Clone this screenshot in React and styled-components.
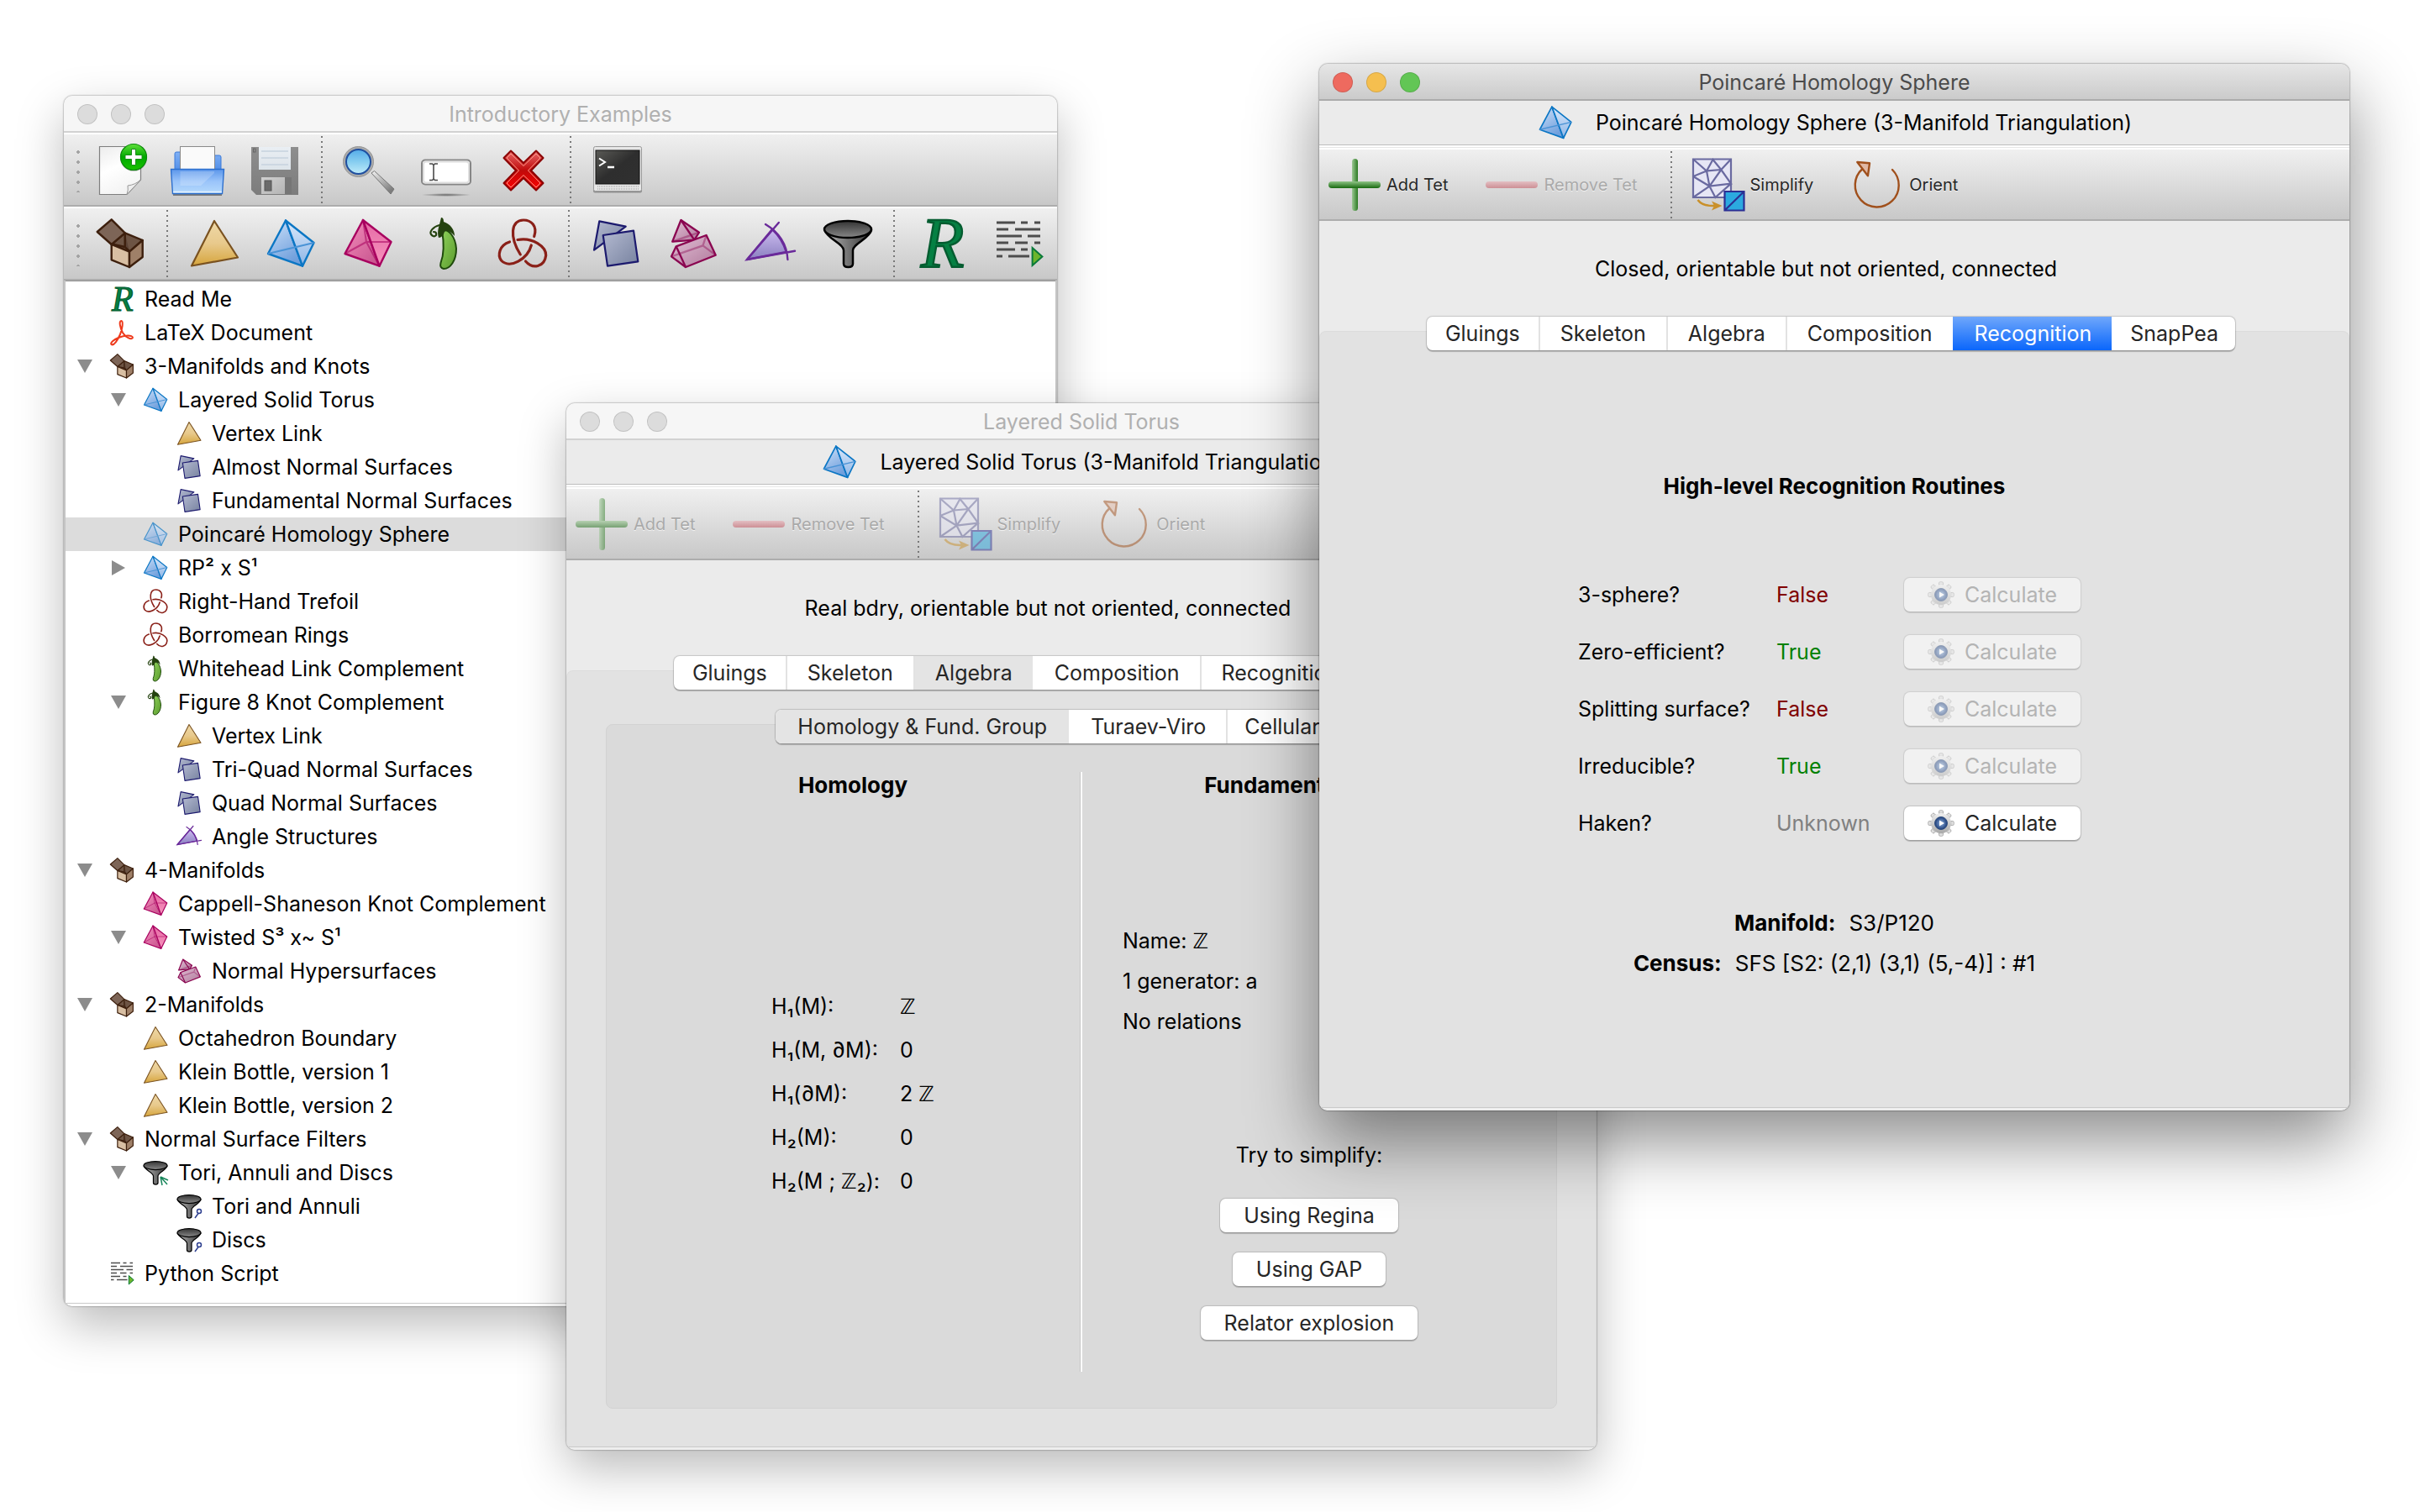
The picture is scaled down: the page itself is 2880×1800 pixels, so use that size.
import React from 'react';
import styled, { createGlobalStyle, css } from 'styled-components';

const font = '"Inter", "Liberation Sans", "DejaVu Sans", sans-serif';

const GlobalStyle = createGlobalStyle`
  * { box-sizing: border-box; }
  body {
    margin: 0;
    background: #fff;
    color: #000;
    font: 25px/32px ${font};
  }
  button { font: inherit; color: inherit; margin: 0; padding: 0; border: 0; background: none; }
  h1, h2, p, ul, dl, dd, dt { margin: 0; padding: 0; font: inherit; }
  ul { list-style: none; }
  svg { display: block; flex: none; overflow: visible; }
`;

/* ---------- icon drawings ---------- */

const HiddenSvg = styled.svg`
  position: absolute;
  width: 0;
  height: 0;
`;

const Grad = ({ id, from, to, mid, x2 = 0, y2 = 1 }) => (
  <linearGradient id={id} x1="0" y1="0" x2={x2} y2={y2}>
    <stop offset="0" stopColor={from} />
    {mid && <stop offset="0.5" stopColor={mid} />}
    <stop offset="1" stopColor={to} />
  </linearGradient>
);

const Gradients = () => (
  <HiddenSvg aria-hidden="true">
    <defs>
      <Grad id="gold" from="#efd9a8" mid="#e8c98c" to="#d6a53c" />
      <Grad id="blueL" from="#cfe2fa" to="#6f9fdc" x2={0.5} />
      <Grad id="blueR" from="#dbe9fb" to="#8db5e6" />
      <Grad id="pinkL" from="#f58fbd" to="#c9568f" x2={0.8} />
      <Grad id="pinkR" from="#e56aa5" to="#f794bd" />
      <Grad id="slate" from="#b4bad1" to="#77829f" x2={1} />
      <Grad id="mauve" from="#e2bfd5" to="#b07a9c" x2={1} />
      <Grad id="violet" from="#cdbdf0" to="#8a7fc0" />
      <Grad id="chili" from="#8fd25c" to="#5a9a2c" x2={1} />
      <Grad id="cup" from="#333" to="#888" />
      <Grad id="stem" from="#b5b5b5" to="#333" x2={1} y2={0} />
      <Grad id="paper" from="#ececec" mid="#fff" to="#f4f4f4" x2={0.4} />
      <Grad id="folder" from="#5b96ea" mid="#9ac4fa" to="#b5dafc" />
      <Grad id="folderBack" from="#7fb0f5" to="#5490e8" />
      <Grad id="badge" from="#5fe03a" mid="#00a800" to="#18c400" />
      <Grad id="disk" from="#8e8e8e" to="#7c7c7c" />
      <Grad id="diskLabel" from="#e9eef3" to="#dde4ea" />
      <Grad id="shutter" from="#d0d0d0" to="#b4b4b4" x2={1} />
      <Grad id="lens" from="#4fa8e8" mid="#86cdf0" to="#c5eefa" />
      <Grad id="handle" from="#f2f2f2" to="#7d7d7d" x2={0.6} />
      <Grad id="cross" from="#e86a6a" mid="#c00a0a" to="#ff0000" />
      <Grad id="screen" from="#5a5a56" mid="#2e2e2e" to="#303030" x2={1} />
      <Grad id="plusV" from="#9cc894" to="#2b7a22" x2={1} y2={0} />
      <Grad id="plusH" from="#8fc486" to="#17690f" />
      <Grad id="minus" from="#e8a0a8" to="#c04450" />
      <Grad id="gear" from="#f0f0f0" to="#a8a8a8" />
      <radialGradient id="gearHub">
        <stop offset="0" stopColor="#8fb2e0" />
        <stop offset="1" stopColor="#1c3c78" />
      </radialGradient>
      <radialGradient id="floor">
        <stop offset="0" stopColor="#666" />
        <stop offset="1" stopColor="#666" stopOpacity="0" />
      </radialGradient>
    </defs>
  </HiddenSvg>
);

const funnel = (
  <g stroke="#000" strokeWidth="2.5" strokeLinejoin="round">
    <path d="M4.5 16C7 26 27 32 27 40V56Q27 60 32.5 60T38 56V40C38 32 58 26 60 16Z" fill="url(#stem)" />
    <ellipse cx="32" cy="15" rx="28" ry="10" fill="url(#cup)" />
  </g>
);

const gearTeeth = [0, 45, 90, 135, 180, 225, 270, 315];

const art = {
  container: (
    <g stroke="#3d1f0d" strokeWidth="2.4" strokeLinejoin="round">
      <path d="M37.700 19.300L58.700 28L43 41.700L21.700 33Z" fill="#6d5444" />
      <path d="M37.700 19.300V36L43 41M37.700 36L24 33" fill="#5b4336" />
      <path d="M21.700 3.300L4.700 18L21.700 33L37.700 19.300Z" fill="#7d6557" />
      <path d="M21.700 33V51.300L43 60V41.700Z" fill="#d8bfa3" />
      <path d="M43 41.700L58.700 28V48L43 60Z" fill="#9f8068" />
    </g>
  ),
  dim2: <path d="M32 5L5 58.500L60 48.500Z" fill="url(#gold)" stroke="#7a5220" strokeWidth="2.2" strokeLinejoin="round" />,
  dim3: (
    <g stroke="#0b76c4" strokeWidth="2.4" strokeLinejoin="round">
      <path d="M26 4.500L5 44L46 58.700Z" fill="url(#blueL)" />
      <path d="M26 4.500L59.500 31L46 58.700Z" fill="url(#blueR)" />
      <path d="M5 44L59.500 31" stroke="#4a93d6" strokeWidth="2" />
    </g>
  ),
  dim4: (
    <g stroke="#a8005f" strokeWidth="2.4" strokeLinejoin="round">
      <path d="M26 4L4.500 44L45.500 58.700Z" fill="url(#pinkL)" />
      <path d="M26 4L59.500 30L45.500 58.700Z" fill="url(#pinkR)" />
      <path d="M4.500 44L30 30L59.500 30M26 4L30 30L45.500 58.700" fill="none" strokeOpacity="0.55" strokeWidth="2" />
    </g>
  ),
  snappea: (
    <g>
      <path d="M28 16C36 14 44 24 45 38C45 52 38 62 30 62Q25 61 26.500 55C30 46 31 34 28 16Z" fill="url(#chili)" stroke="#1f4a0c" strokeWidth="2" />
      <path d="M27 1Q30 1 30 6C38 9 43 15 43 23C38 17 34 16 31 18Q29 25 24 25C22 18 24 13 25 9Z" fill="#24420f" />
      <path d="M25 10C17 12 13 18 15 21Q18 25 21 22Q22 18 18 18" fill="none" stroke="#24420f" strokeWidth="2.2" strokeLinecap="round" />
    </g>
  ),
  link: (
    <g fill="none" strokeLinecap="round">
      <g stroke="#8a2018" strokeWidth="3.2">
        <path d="M45.700 23.500C50 11 42 4 33 4C18 4 16 24 29.300 45" />
        <path d="M16.500 30C4 34 2 46 6.500 52C17 63 38 50 42.300 34" />
        <path d="M26 27.500C44 24 60 36 59.700 46C58 60 44 63 35.500 53" />
      </g>
    </g>
  ),
  surfaces: (
    <g stroke="#1c1a6e" strokeWidth="2.2" strokeLinejoin="round" fill="url(#slate)">
      <path d="M12.300 5.300L43.700 11.700L6 39.700Z" />
      <path d="M16.700 22L53 16.700L58.300 53.300L22 58.700Z" />
    </g>
  ),
  hypersurfaces: (
    <g stroke="#8a0550" strokeWidth="2.3" strokeLinejoin="round">
      <path d="M17.400 4L39 18.700L33.300 27.700L7.200 29.700Z" fill="url(#mauve)" />
      <path d="M17.400 4L33.300 27.700" fill="none" />
      <path d="M7.200 29.700L39 18.700" strokeOpacity="0.4" />
      <path d="M11.700 35.300L47.600 22L58.700 45.700L23 60L6 47.300Z" fill="url(#mauve)" />
      <path d="M11.700 35.300L23 60" />
      <path d="M6 47.300L43.500 34.300L47.600 22M43.500 34.300L58.700 45.700" fill="none" strokeOpacity="0.4" />
    </g>
  ),
  angles: (
    <g fill="none" stroke="#6a2a9a" strokeWidth="2.4" strokeLinecap="round">
      <path d="M4 51L34 15Q46 26 50.700 42Z" fill="url(#violet)" />
      <path d="M4 51L41.800 7M4 51L61 40.700M26 9Q51 24 52.400 51" />
    </g>
  ),
  filter: funnel,
  filterCombo: (
    <g>
      {funnel}
      <path d="M44 42L62 50M44 42L60 60M44 42L48 62" stroke="#17855a" strokeWidth="3" fill="none" />
    </g>
  ),
  filterProps: (
    <g>
      {funnel}
      <path d="M46 60L54 49" stroke="#2d3f8f" strokeWidth="3" />
      <circle cx="56" cy="44" r="5" fill="#fff" stroke="#2d3f8f" strokeWidth="3" />
    </g>
  ),
  text: (
    <text x="8" y="60" fontFamily='"Liberation Serif", serif' fontStyle="italic" fontSize="84" fill="#058043" stroke="#045c30" strokeWidth="2.4">
      R
    </text>
  ),
  script: (
    <g>
      <path
        d="M6 7H28M35 7H43M51 7H58M6 15H20M28 15H58M6 23H36M43 23H58M6 31H20M28 31H43M51 31H58M6 39H28M35 39H43M6 47H13M20 47H45"
        stroke="#4d4d4d"
        strokeWidth="3"
      />
      <path d="M48.600 37L60.400 47.500L48.600 58Z" fill="#6db52c" stroke="#0a7a3a" strokeWidth="2" />
    </g>
  ),
  pdf: (
    <path
      d="M31 4C24 4 28 20 34 32C41 44 56 50 58 44C58 37 38 38 24 44C12 49 4 56 7 60C13 64 22 50 28 36C33 24 36 5 31 4Z"
      fill="none"
      stroke="#ee3a1c"
      strokeWidth="4"
    />
  ),
  newDoc: (
    <g>
      <path d="M7.500 4.500H56.500V44L40 61.500H7.500Z" fill="url(#paper)" stroke="#7e7e7e" strokeWidth="1.2" />
      <path d="M56.500 44L40 61.500Q42 56 41 51Q50 50 56.500 44Z" fill="#ededed" stroke="#9a9a9a" />
      <circle cx="48" cy="18" r="16" fill="#000" opacity="0.25" />
      <circle cx="48" cy="17" r="15.500" fill="url(#badge)" stroke="#0c8a0c" strokeWidth="1.200" />
      <path d="M45.500 7.500H50.500V14.500H58V19.500H50.500V26.500H45.500V19.500H38V14.500H45.500Z" fill="#fff" stroke="#1a8a1a" />
    </g>
  ),
  open: (
    <g>
      <path d="M5 32V13Q5 11 7 11H12V32ZM52 32V15H58Q60 15 60 17V32Z" fill="url(#folderBack)" stroke="#3c7bd8" />
      <rect x="11.500" y="4.500" width="41" height="30" fill="#fafafa" stroke="#8a8a8a" />
      <path d="M3 62H61" stroke="#444" strokeWidth="2" opacity="0.6" />
      <path d="M0.500 31.500H63.500L61.500 60.500H2.500Z" fill="url(#folder)" stroke="#2c6fce" strokeWidth="1.400" />
      <path d="M11.500 34V51H36L52 36V34Z" fill="#fff" opacity="0.2" />
      <path d="M3 58.500H61" stroke="#e6f3ff" strokeWidth="1.600" />
    </g>
  ),
  save: (
    <g>
      <path d="M4 5H60V62H10L4 56Z" fill="url(#disk)" />
      <rect x="13" y="5" width="38" height="27" fill="url(#diskLabel)" />
      <path d="M16 10H48M16 18H48M16 26H48" stroke="#c6d2de" strokeWidth="1.600" />
      <rect x="16" y="41" width="28" height="20" fill="url(#shutter)" />
      <rect x="44" y="41" width="8" height="20" fill="#767676" />
      <rect x="20" y="45" width="8" height="12" fill="#6a6a6a" stroke="#555" />
      <rect x="6.500" y="7" width="2.500" height="4" fill="none" stroke="#666" />
    </g>
  ),
  find: (
    <g>
      <path d="M35 36L38.500 33.500L62 55L58 61Z" fill="url(#handle)" stroke="#777" />
      <circle cx="19.500" cy="22.500" r="16" fill="url(#lens)" stroke="#aaa" strokeWidth="4" />
      <circle cx="19.500" cy="22.500" r="18" fill="none" stroke="#8a8a8a" strokeWidth="0.800" />
      <circle cx="19.500" cy="22.500" r="14.500" fill="none" stroke="#1f4fa0" strokeWidth="2" />
    </g>
  ),
  rename: (
    <g>
      <rect x="3" y="20.500" width="58" height="29" rx="4" fill="#fff" stroke="#868686" strokeWidth="2" />
      <rect x="5" y="22.500" width="54" height="25" rx="3" fill="none" stroke="#dedede" strokeWidth="2" />
      <path d="M12 25H15.500L17 26.500L18.500 25H22M12 44.500H15.500L17 43L18.500 44.500H22M17 26V44" fill="none" stroke="#4a4a4a" strokeWidth="1.600" />
      <ellipse cx="32" cy="62" rx="30" ry="2" fill="url(#floor)" />
    </g>
  ),
  remove: (
    <g strokeLinejoin="round">
      <path
        d="M17 9.500L32 24L47 9.500L55.500 18L41 33L55.500 48L47 56.500L32 42L17 56.500L8.500 48L23 33L8.500 18Z"
        fill="url(#cross)"
        stroke="#8a0000"
        strokeWidth="2"
      />
      <path
        d="M17 13L32 27.500L47 13L52 18L37.500 33L52 48L47 53L32 38.500L17 53L12 48L26.500 33L12 18Z"
        fill="none"
        stroke="#ff9a8a"
        strokeWidth="1"
      />
    </g>
  ),
  console: (
    <g>
      <rect x="3" y="5.500" width="58" height="54" rx="2" fill="#000" opacity="0.3" />
      <rect x="3.500" y="4.500" width="57" height="53" rx="2" fill="#e6e6e6" stroke="#9a9a9a" />
      <rect x="6" y="9" width="52" height="40" fill="url(#screen)" stroke="#111" />
      <path d="M10 18.500L17 23L10 27.500" fill="none" stroke="#fff" strokeWidth="2" />
      <path d="M20 29H28" stroke="#fff" strokeWidth="2.400" />
      <path d="M8 52H57M8 55H57" stroke="#999" strokeDasharray="1 1" />
    </g>
  ),
  plus: (
    <g>
      <rect x="29" y="1" width="7" height="62" rx="3.500" fill="url(#plusV)" />
      <rect x="1" y="28" width="62" height="8" rx="4" fill="url(#plusH)" />
    </g>
  ),
  minus: <rect x="1" y="28" width="62" height="8" rx="4" fill="url(#minus)" />,
  simplify: (
    <g>
      <path d="M2 1.500H47V47H2Z" fill="#e6e6f5" stroke="#6a6aa0" strokeWidth="2.200" />
      <path
        d="M2 1.500L18 15.500L25.500 2L35.300 14L47 1.500M18 15.500L35.300 14M2 22L18 15.500L21.500 33.700L2 22M35.300 14L21.500 33.700L47 30.700L35.300 14M21.500 33.700L2 47M21.500 33.700L28.400 47L47 30.700"
        fill="none"
        stroke="#6a6aa0"
        strokeWidth="2.200"
      />
      <path d="M39.500 40H62.500V62.500H39.500Z" fill="#2ba9e0" />
      <path d="M39.500 40H62.500V62.500H39.500ZM39.500 62.500L62.500 40" fill="none" stroke="#2b2f94" strokeWidth="2.200" />
      <path d="M7.500 50Q13 57.500 27 57" fill="none" stroke="#c9902a" strokeWidth="2.600" />
      <path d="M36.500 57L24 51.500L27 57L24 62.500Z" fill="#c9902a" />
    </g>
  ),
  orient: (
    <g fill="none" stroke="#a0501c" strokeWidth="2.400" strokeLinecap="round">
      <path d="M50 14A26 26 0 1 1 14.500 13" />
      <path d="M8.300 5L23 6.300L20.900 21.300Z" fill="#e0b8a4" strokeLinejoin="round" />
    </g>
  ),
  gear: (
    <g>
      <g stroke="#999" strokeWidth="1.500" fill="url(#gear)">
        {gearTeeth.map((a) => (
          <rect key={a} x="27" y="1.500" width="10" height="14" rx="3" transform={`rotate(${a} 32 32)`} />
        ))}
      </g>
      <circle cx="32" cy="32" r="24" fill="url(#gear)" />
      <circle cx="32" cy="32" r="15" fill="url(#gearHub)" stroke="#33507f" strokeWidth="2" />
      <path d="M28 25L40 32L28 39Z" fill="#fff" />
    </g>
  ),
};

const Icon = ({ name, size = 64 }) => (
  <svg width={size} height={size} viewBox="0 0 64 64" aria-hidden="true">
    {art[name]}
  </svg>
);

/* ---------- window chrome ---------- */

const Desktop = styled.main`
  position: relative;
  min-height: 100vh;
  overflow: hidden;
`;

const WindowFrame = styled.section`
  position: absolute;
  left: round(${(p) => p.$left}vw, 1px);
  top: round(${(p) => p.$top}vh, 1px);
  width: round(${(p) => p.$width}vw, 1px);
  min-height: round(${(p) => p.$height}vh, 1px);
  display: flex;
  flex-direction: column;
  overflow: hidden;
  border-radius: 10px;
  background: #ebebeb;
  box-shadow: ${(p) =>
    p.$active
      ? '0 0 2px rgba(0, 0, 0, 0.7), 0 36px 84px rgba(0, 0, 0, 0.46)'
      : '0 0 2px rgba(0, 0, 0, 0.6), 0 22px 56px rgba(0, 0, 0, 0.27)'};
`;

const TitleBar = styled.header`
  display: grid;
  grid-template-columns: 1fr auto 1fr;
  align-items: center;
  height: 44px;
  padding: 2px 16px 0;
  color: ${(p) => (p.$active ? '#4b4b4b' : '#b0b0b0')};
  background: ${(p) => (p.$active ? 'linear-gradient(#e6e6e6, #cbcbcb)' : '#f6f6f6')};
  border-bottom: 2px solid ${(p) => (p.$active ? '#ababab' : '#d2d2d2')};
`;

const Lights = styled.div`
  display: flex;
  gap: 16px;
`;

const Light = styled.button`
  width: 24px;
  height: 24px;
  border-radius: 50%;
  background: ${(p) => p.$color};
  border: 1px solid rgba(0, 0, 0, 0.12);
`;

const Footer = styled.div`
  height: 4px;
  border-top: 1px solid #cacaca;
  background: ${(p) => (p.$plain ? '#fff' : '#eee')};
`;

const lightNames = ['Close', 'Minimise', 'Zoom'];

const AppWindow = ({ title, active, plain, place, children }) => (
  <WindowFrame $active={active} $left={place[0]} $top={place[1]} $width={place[2]} $height={place[3]}>
    <TitleBar $active={active}>
      <Lights>
        {(active ? ['#ee6a5f', '#f5bf4f', '#62c655'] : ['#dcdcdc', '#dcdcdc', '#dcdcdc']).map((c, i) => (
          <Light key={i} $color={c} aria-label={lightNames[i]} />
        ))}
      </Lights>
      <h1>{title}</h1>
    </TitleBar>
    {children}
    <Footer $plain={plain} />
  </WindowFrame>
);

/* ---------- toolbars ---------- */

const Toolbar = styled.div`
  display: flex;
  align-items: center;
  height: ${(p) => (p.$labelled ? 87 : 88)}px;
  padding-left: ${(p) => (p.$labelled ? 10 : 14)}px;
  background: linear-gradient(#f0f0f0, #c8c8c8);
  border-top: 2px solid #fff;
  border-bottom: 2px solid #adadad;
`;

const Handle = styled.span`
  width: 7px;
  height: 54px;
  background: radial-gradient(circle, #a3a3a3 2px, transparent 2px) 0 0 / 6px 12px repeat-y;
`;

const Separator = styled.span`
  flex: none;
  align-self: stretch;
  width: 20px;
  margin: ${(p) => (p.$labelled ? '2px 14px 0 30px' : '2px 0 0')};
  background: repeating-linear-gradient(#787878 0 2px, transparent 2px 6px) center / 2px 100% no-repeat;
`;

const IconButton = styled.button`
  display: flex;
  justify-content: center;
  width: 92px;
`;

const ToolButton = styled.button`
  display: flex;
  align-items: center;
  gap: 6px;
  margin-right: ${(p) => (p.$last ? 0 : 44)}px;
  font-size: 20px;
  color: #262626;
  text-shadow: 0 1px 0 rgba(255, 255, 255, 0.7);
  &:disabled { color: #a9a9a9; }
  &:disabled svg { opacity: 0.5; }
`;

const IconToolbar = ({ items }) => (
  <Toolbar role="toolbar">
    <Handle />
    {items.map((item, i) =>
      item === '|' ? (
        <Separator key={i} />
      ) : (
        <IconButton key={i} aria-label={item[1]}>
          <Icon name={item[0]} />
        </IconButton>
      )
    )}
  </Toolbar>
);

const fileTools = [
  ['newDoc', 'New'], ['open', 'Open'], ['save', 'Save'], '|',
  ['find', 'View'], ['rename', 'Rename'], ['remove', 'Delete'], '|',
  ['console', 'Python Console'],
];

const packetTools = [
  ['container', 'New Container'], '|',
  ['dim2', 'New 2-D Triangulation'], ['dim3', 'New 3-D Triangulation'], ['dim4', 'New 4-D Triangulation'],
  ['snappea', 'New SnapPea Triangulation'], ['link', 'New Link'], '|',
  ['surfaces', 'New Normal Surfaces'], ['hypersurfaces', 'New Normal Hypersurfaces'],
  ['angles', 'New Angle Structures'], ['filter', 'New Filter'], '|',
  ['text', 'New Text'], ['script', 'New Script'],
];

/* ---------- packet tree ---------- */

const TreeWrap = styled.div`
  flex: 1;
  display: flex;
  flex-direction: column;
  background: #c4c4c4;
`;

const Tree = styled.ul`
  flex: 1;
  margin: 0 2px;
  padding: 1px 0 14px;
  background: #fff;
  border-top: 1px solid #8e8e8e;
`;

const TreeRow = styled.li`
  display: flex;
  align-items: center;
  height: 40px;
  padding-left: ${(p) => 3 + p.$level * 40}px;
  background: ${(p) => (p.$selected ? '#dcdcdc' : 'transparent')};
  svg { opacity: ${(p) => (p.$selected ? 0.7 : 1)}; }
`;

const Expander = styled.button`
  width: 40px;
  height: 40px;
  margin-right: 8px;
  display: grid;
  place-items: center;
`;

const ExpanderGap = styled.span`
  width: 48px;
`;

const Triangle = styled.span`
  width: 18px;
  height: 16px;
  background: #8c8c8c;
  clip-path: polygon(0 0, 100% 0, 50% 100%);
  ${(p) =>
    !p.$open &&
    css`
      width: 16px;
      height: 18px;
      clip-path: polygon(0 0, 100% 50%, 0 100%);
    `}
`;

const RowLabel = styled.span`
  margin-left: 11px;
  white-space: nowrap;
`;

const packets = [
  [0, 'text', 'Read Me'],
  [0, 'pdf', 'LaTeX Document'],
  [0, 'container', '3-Manifolds and Knots', 'open'],
  [1, 'dim3', 'Layered Solid Torus', 'open'],
  [2, 'dim2', 'Vertex Link'],
  [2, 'surfaces', 'Almost Normal Surfaces'],
  [2, 'surfaces', 'Fundamental Normal Surfaces'],
  [1, 'dim3', 'Poincaré Homology Sphere', null, true],
  [1, 'dim3', 'RP² x S¹', 'closed'],
  [1, 'link', 'Right-Hand Trefoil'],
  [1, 'link', 'Borromean Rings'],
  [1, 'snappea', 'Whitehead Link Complement'],
  [1, 'snappea', 'Figure 8 Knot Complement', 'open'],
  [2, 'dim2', 'Vertex Link'],
  [2, 'surfaces', 'Tri-Quad Normal Surfaces'],
  [2, 'surfaces', 'Quad Normal Surfaces'],
  [2, 'angles', 'Angle Structures'],
  [0, 'container', '4-Manifolds', 'open'],
  [1, 'dim4', 'Cappell-Shaneson Knot Complement'],
  [1, 'dim4', 'Twisted S³ x~ S¹', 'open'],
  [2, 'hypersurfaces', 'Normal Hypersurfaces'],
  [0, 'container', '2-Manifolds', 'open'],
  [1, 'dim2', 'Octahedron Boundary'],
  [1, 'dim2', 'Klein Bottle, version 1'],
  [1, 'dim2', 'Klein Bottle, version 2'],
  [0, 'container', 'Normal Surface Filters', 'open'],
  [1, 'filterCombo', 'Tori, Annuli and Discs', 'open'],
  [2, 'filterProps', 'Tori and Annuli'],
  [2, 'filterProps', 'Discs'],
  [0, 'script', 'Python Script'],
];

const PacketTree = () => (
  <TreeWrap>
    <Tree>
      {packets.map(([level, icon, label, state, selected], i) => (
        <TreeRow key={i} $level={level} $selected={selected}>
          {state ? (
            <Expander aria-label={`Toggle ${label}`}>
              <Triangle $open={state === 'open'} />
            </Expander>
          ) : (
            <ExpanderGap />
          )}
          <Icon name={icon} size={32} />
          <RowLabel>{label}</RowLabel>
        </TreeRow>
      ))}
    </Tree>
  </TreeWrap>
);

/* ---------- triangulation viewer ---------- */

const PacketHeader = styled.div`
  display: flex;
  align-items: center;
  justify-content: center;
  gap: 26px;
  height: 53px;
  border-bottom: 1px solid #bdbdbd;
  white-space: nowrap;
`;

const HeaderGap = styled.div`
  height: 3px;
  background: #fff;
  border-bottom: 1px solid #e6e6e6;
`;

const Summary = styled.p`
  padding: 41px ${(p) => p.$inset}px 41px 0;
  text-align: center;
`;

const TabBar = styled.div`
  position: relative;
  display: flex;
  align-self: center;
  height: 40px;
  margin: 0 8px -23px 0;
  border-radius: 7px;
  background: #fff;
  box-shadow: 0 0 1px 1px rgba(0, 0, 0, 0.16), 0 2px 1px rgba(0, 0, 0, 0.2);
  overflow: hidden;
`;

const Tab = styled.button`
  padding: 0 24px;
  white-space: nowrap;
  color: #262626;
  border-left: 2px solid #e2e2e2;
  &:first-child {
    border-left: 0;
    padding: 0 ${(p) => (p.$roomy ? 26 : 22)}px;
  }
  &:last-child { padding: 0 20px; }
  ${(p) =>
    p.$on === 'focus' &&
    css`
      color: #fff;
      background: linear-gradient(#6fa7fb, #0a66fb);
      border-color: transparent;
      background-origin: border-box;
      & + button { border-color: #fff; }
    `}
  ${(p) =>
    p.$on === 'quiet' &&
    css`
      background: #e4e4e4;
      & + button { border-color: #fff; }
    `}
`;

const Pane = styled.div`
  flex: 1;
  display: flex;
  flex-direction: column;
  padding-top: 22px;
  background: ${(p) => (p.$inner ? '#dadada' : '#e2e2e2')};
  border: 1px solid ${(p) => (p.$inner ? '#d2d2d2' : '#dcdcdc')};
  border-radius: 8px;
  margin: ${(p) => (p.$inner ? '0 46px 45px' : '0')};
  ${(p) => !p.$inner && css`border-bottom: 0; border-radius: 8px 8px 0 0;`}
`;

const Tabs = ({ labels, selected, mode, roomy }) => (
  <TabBar role="tablist">
    {labels.map((label) => (
      <Tab
        key={label}
        role="tab"
        aria-selected={label === selected}
        $on={label === selected ? mode : undefined}
        $roomy={roomy}
      >
        {label}
      </Tab>
    ))}
  </TabBar>
);

const viewerTabs = ['Gluings', 'Skeleton', 'Algebra', 'Composition', 'Recognition', 'SnapPea'];

const Viewer = ({ name, summary, summaryInset, tab, mode, readOnly, children }) => (
  <>
    <PacketHeader>
      <Icon name="dim3" size={44} />
      <h2>{name} (3-Manifold Triangulation)</h2>
    </PacketHeader>
    <HeaderGap />
    <Toolbar $labelled role="toolbar">
      <ToolButton disabled={readOnly}><Icon name="plus" />Add Tet</ToolButton>
      <ToolButton disabled $last><Icon name="minus" />Remove Tet</ToolButton>
      <Separator $labelled />
      <ToolButton disabled={readOnly}><Icon name="simplify" />Simplify</ToolButton>
      <ToolButton disabled={readOnly} $last><Icon name="orient" />Orient</ToolButton>
    </Toolbar>
    <Summary $inset={summaryInset}>{summary}</Summary>
    <Tabs labels={viewerTabs} selected={tab} mode={mode} />
    <Pane>{children}</Pane>
  </>
);

const Heading = styled.h2`
  font-size: 26px;
  font-weight: 700;
  text-align: center;
  white-space: nowrap;
`;

const PushButton = styled.button`
  display: flex;
  align-items: center;
  justify-content: center;
  gap: 12px;
  height: 40px;
  padding: 0 28px;
  border-radius: 7px;
  color: #262626;
  background: #fff;
  box-shadow: 0 0 1px 1px rgba(0, 0, 0, 0.14), 0 2px 1px rgba(0, 0, 0, 0.18);
  &:disabled {
    color: #b4b4b4;
    background: #f1f1f1;
    box-shadow: 0 0 1px 1px rgba(0, 0, 0, 0.09), 0 2px 1px rgba(0, 0, 0, 0.1);
  }
  &:disabled svg { opacity: 0.5; }
`;

/* ---------- algebra tab ---------- */

const Algebra = styled.div`
  display: flex;
  flex-direction: column;
  flex: 1;
  padding-top: 24px;
`;

const Columns = styled.div`
  flex: 1;
  display: grid;
  grid-template-columns: 1fr 1fr;
  margin: 34px 24px 43px 22px;
`;

const Column = styled.div`
  display: flex;
  flex-direction: column;
  align-items: center;
  & + & {
    border-left: 2px solid #fff;
    box-shadow: -1px 0 0 #c6c6c6;
  }
`;

const Groups = styled.dl`
  display: grid;
  grid-template-columns: auto auto;
  gap: 20px 24px;
  margin-top: 231px;
`;

const Presentation = styled.div`
  display: grid;
  gap: 16px;
  align-self: stretch;
  margin: 153px 0 127px 48px;
`;

const ButtonStack = styled.div`
  display: flex;
  flex-direction: column;
  align-items: center;
  gap: 24px;
  margin-top: 36px;
`;

const groups = [
  ['H₁(M):', 'ℤ'],
  ['H₁(M, ∂M):', '0'],
  ['H₁(∂M):', '2 ℤ'],
  ['H₂(M):', '0'],
  ['H₂(M ; ℤ₂):', '0'],
];

const AlgebraTab = () => (
  <Algebra>
    <Tabs
      labels={['Homology & Fund. Group', 'Turaev-Viro', 'Cellular Info']}
      selected="Homology & Fund. Group"
      mode="quiet"
      roomy
    />
    <Pane $inner>
      <Columns>
        <Column>
          <Heading>Homology</Heading>
          <Groups>
            {groups.map(([k, v]) => (
              <React.Fragment key={k}>
                <dt>{k}</dt>
                <dd>{v}</dd>
              </React.Fragment>
            ))}
          </Groups>
        </Column>
        <Column>
          <Heading>Fundamental Group</Heading>
          <Presentation>
            <p>Name: ℤ</p>
            <p>1 generator: a</p>
            <p>No relations</p>
          </Presentation>
          <p>Try to simplify:</p>
          <ButtonStack>
            <PushButton>Using Regina</PushButton>
            <PushButton>Using GAP</PushButton>
            <PushButton>Relator explosion</PushButton>
          </ButtonStack>
        </Column>
      </Columns>
    </Pane>
  </Algebra>
);

/* ---------- recognition tab ---------- */

const Recognition = styled.div`
  display: flex;
  flex-direction: column;
  align-items: center;
  padding-top: 146px;
`;

const Routines = styled.div`
  display: grid;
  grid-template-columns: 208px 124px auto;
  align-items: center;
  gap: 28px;
  margin: 93px 12px 83px 0;
`;

const Verdict = styled.span`
  color: ${(p) => ({ True: '#008000', False: '#800000', Unknown: '#808080' })[p.children]};
`;

const Facts = styled.div`
  display: grid;
  justify-items: center;
  gap: 16px;
  font-size: 26px;
`;

const Fact = styled.p`
  display: flex;
  gap: 16px;
`;

const routines = [
  ['3-sphere?', 'False'],
  ['Zero-efficient?', 'True'],
  ['Splitting surface?', 'False'],
  ['Irreducible?', 'True'],
  ['Haken?', 'Unknown'],
];

const RecognitionTab = () => (
  <Recognition>
    <Heading>High-level Recognition Routines</Heading>
    <Routines>
      {routines.map(([question, answer]) => (
        <React.Fragment key={question}>
          <span>{question}</span>
          <Verdict>{answer}</Verdict>
          <PushButton disabled={answer !== 'Unknown'}>
            <Icon name="gear" size={32} />
            Calculate
          </PushButton>
        </React.Fragment>
      ))}
    </Routines>
    <Facts>
      <Fact><b>Manifold:</b> S3/P120</Fact>
      <Fact><b>Census:</b> SFS [S2: (2,1) (3,1) (5,-4)] : #1</Fact>
    </Facts>
  </Recognition>
);

export default function App() {
  return (
    <Desktop>
      <GlobalStyle />
      <Gradients />
      <AppWindow title="Introductory Examples" plain place={[2.64, 6.33, 41.04, 80.06]}>
        <IconToolbar items={fileTools} />
        <IconToolbar items={packetTools} />
        <PacketTree />
      </AppWindow>
      <AppWindow title="Layered Solid Torus" place={[23.4, 26.67, 42.57, 69.22]}>
        <Viewer
          name="Layered Solid Torus"
          summary="Real bdry, orientable but not oriented, connected"
          summaryInset={80}
          tab="Algebra"
          mode="quiet"
          readOnly
        >
          <AlgebraTab />
        </Viewer>
      </AppWindow>
      <AppWindow title="Poincaré Homology Sphere" active place={[54.5, 4.22, 42.57, 69.22]}>
        <Viewer
          name="Poincaré Homology Sphere"
          summary="Closed, orientable but not oriented, connected"
          summaryInset={20}
          tab="Recognition"
          mode="focus"
        >
          <RecognitionTab />
        </Viewer>
      </AppWindow>
    </Desktop>
  );
}
